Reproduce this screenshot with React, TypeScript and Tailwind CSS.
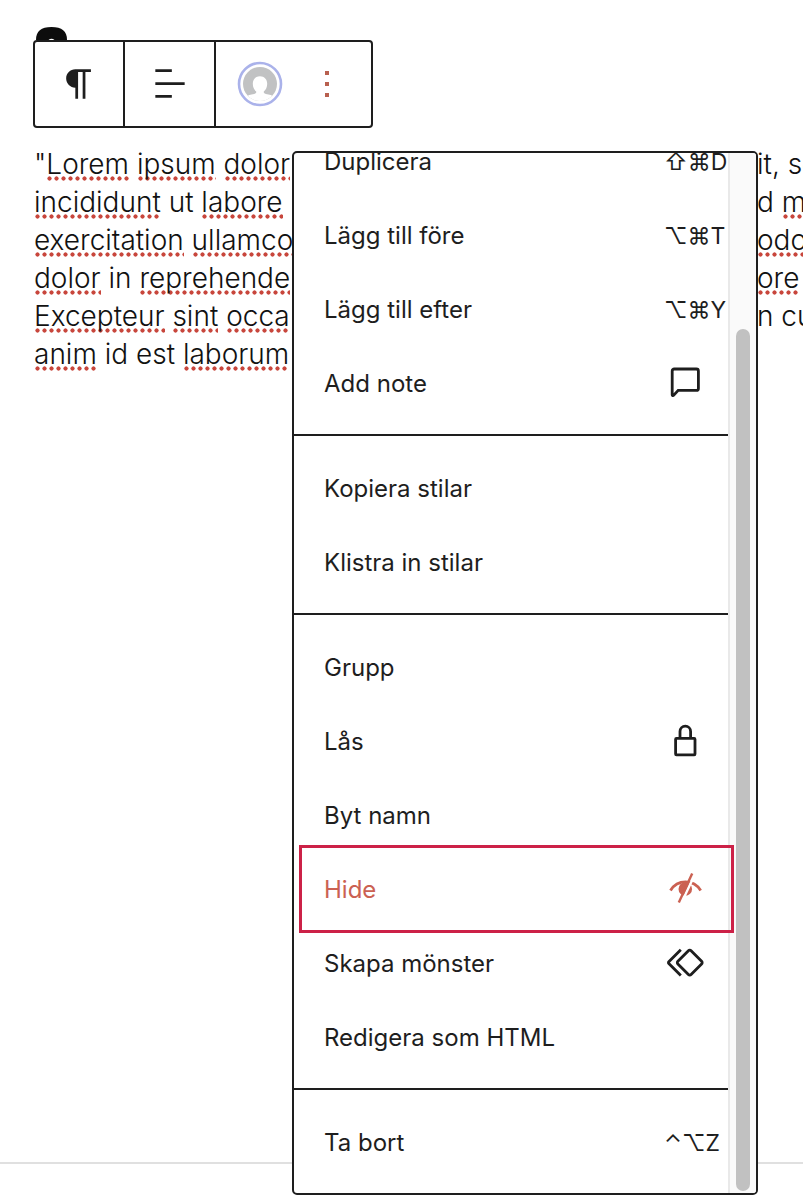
import type { ReactNode } from "react";

type Word = { text: string; misspelled?: boolean };
type Line = { start: Word[]; end?: Word[] };

const bad = (text: string): Word => ({ text, misspelled: true });
const ok = (text: string): Word => ({ text });

const lines: Line[] = [
  { start: [ok('"'), bad("Lorem"), ok(" "), bad("ipsum"), ok(" "), bad("dolor")], end: [ok("it, se")] },
  { start: [bad("incididunt"), ok(" ut "), bad("labore")], end: [ok("d "), bad("m")] },
  { start: [bad("exercitation"), ok(" "), bad("ullamco")], end: [bad("odo")] },
  { start: [bad("dolor"), ok(" in "), bad("reprehende")], end: [bad("ore")] },
  { start: [bad("Excepteur"), ok(" "), bad("sint"), ok(" "), bad("occa")], end: [ok("n cu")] },
  { start: [bad("anim"), ok(" id est "), bad("laborum")] },
];

function Words({ words }: { words: Word[] }) {
  return (
    <>
      {words.map((word, i) => (
        <span
          key={i}
          className={
            word.misspelled
              ? "bg-[radial-gradient(circle,#c8463c_1.8px,transparent_2.4px)] bg-[length:7px_5px] bg-bottom-left bg-repeat-x"
              : undefined
          }
        >
          {word.text}
        </span>
      ))}
    </>
  );
}

function Icon({ children }: { children: ReactNode }) {
  return (
    <svg
      viewBox="0 0 44 44"
      className="size-11"
      fill="none"
      stroke="currentColor"
      strokeWidth="2.8"
      aria-hidden="true"
    >
      {children}
    </svg>
  );
}

const NoteIcon = () => (
  <Icon>
    <path d="M11.2 8H33.4a2 2 0 0 1 2 2V27.4a2 2 0 0 1-2 2H15.2L10.6 34.4a.8 .8 0 0 1-1.4-.6V10a2 2 0 0 1 2-2Z" />
  </Icon>
);

const LockIcon = () => (
  <Icon>
    <rect x="12.6" y="19.4" width="19.4" height="16.4" rx="0.8" />
    <path d="M17 19V12.4a5.3 5.3 0 0 1 10.6 0V19" />
  </Icon>
);

const HiddenIcon = () => (
  <Icon>
    <path d="M7.5 23.4C14.5 12 30.5 12 37.7 23.4" />
    <circle cx="22.3" cy="22" r="6.8" fill="currentColor" stroke="none" />
    <path d="M18.2 36.5 31.8 7.5" stroke="#fff" strokeWidth="2.4" />
    <path d="M15.8 35.6 29.2 6.5" strokeWidth="2.4" />
  </Icon>
);

const PatternIcon = () => (
  <Icon>
    <path d="M25.4 9.7a1.9 1.9 0 0 1 2.7 0L38.6 20.3a1.9 1.9 0 0 1 0 2.7L28.1 33.5a1.9 1.9 0 0 1-2.7 0L14.9 23a1.9 1.9 0 0 1 0-2.7Z" />
    <path d="M17.8 8.8 5.8 20.8a1.2 1.2 0 0 0 0 1.7L17.8 34.6" />
  </Icon>
);

type Item = { label: string; shortcut?: string; icon?: ReactNode; highlighted?: boolean };

const groups: Item[][] = [
  [
    { label: "Duplicera", shortcut: "⇧⌘D" },
    { label: "Lägg till före", shortcut: "⌥⌘T" },
    { label: "Lägg till efter", shortcut: "⌥⌘Y" },
    { label: "Add note", icon: <NoteIcon /> },
  ],
  [{ label: "Kopiera stilar" }, { label: "Klistra in stilar" }],
  [
    { label: "Grupp" },
    { label: "Lås", icon: <LockIcon /> },
    { label: "Byt namn" },
    { label: "Hide", icon: <HiddenIcon />, highlighted: true },
    { label: "Skapa mönster", icon: <PatternIcon /> },
    { label: "Redigera som HTML" },
  ],
  [{ label: "Ta bort", shortcut: "⌃⌥Z" }],
];

function MenuRow({ item }: { item: Item }) {
  return (
    <button
      type="button"
      role="menuitem"
      className={`relative flex h-[74px] w-full items-center justify-between pl-[30px] text-left ${
        item.highlighted ? "text-[#cb6152]" : ""
      }`}
    >
      <span>{item.label}</span>
      {item.shortcut && <span className="w-16 text-[23px] whitespace-nowrap">{item.shortcut}</span>}
      {item.icon && <span className="mr-[21px] pb-0.5">{item.icon}</span>}
      {item.highlighted && (
        <span className="absolute -top-2 -right-1.5 -bottom-1.5 left-[5px] z-10 border-3 border-[#cc2147]" />
      )}
    </button>
  );
}

function BlockMenu() {
  return (
    <div
      role="menu"
      className="absolute top-[151px] left-[292px] flex w-[466px] overflow-hidden rounded-[5px] border-2 border-[#1e1e1e] bg-white text-2xl text-[#1e1e1e]"
    >
      <div className="-mt-7 min-w-0 flex-1">
        {groups.map((group, i) => (
          <div
            key={i}
            role="group"
            className={i === 0 ? "pb-[13px]" : "border-t-2 border-[#1e1e1e] pt-4 pb-[13px]"}
          >
            {group.map((item) => (
              <MenuRow key={item.label} item={item} />
            ))}
          </div>
        ))}
      </div>
      <div className="flex w-7 border-l-2 border-[#e9e9e9] bg-[#fafafa] pt-44 pr-1.5 pb-0.5 pl-1.5">
        <div className="flex-1 rounded-full bg-[#c1c1c1]" />
      </div>
    </div>
  );
}

function Toolbar() {
  return (
    <div
      role="toolbar"
      className="relative flex h-[88px] w-[340px] rounded-[4px] border-2 border-[#1e1e1e] bg-white text-[#1e1e1e]"
    >
      <button
        type="button"
        aria-label="Stycke"
        className="flex w-[90px] items-center justify-center border-r-2 border-[#1e1e1e]"
      >
        <svg viewBox="0 0 24 24" className="size-11" fill="currentColor">
          <path d="m9.996 14v-.225l.004 0v6.225h1.5v-14.5h2.5v14.5h1.5v-14.5h3v-1.5h-8.504c-2.761 0-5 2.239-5 5s2.239 5 5 5z" />
        </svg>
      </button>
      <button
        type="button"
        aria-label="Justera"
        className="flex w-[91px] items-center justify-center border-r-2 border-[#1e1e1e]"
      >
        <svg viewBox="0 0 24 24" className="size-11" fill="currentColor">
          <path d="M13 5.5H4V4h9v1.5Zm7 7H4V11h16v1.5Zm-7 7H4V18h9v1.5Z" />
        </svg>
      </button>
      <div className="flex flex-1 items-center gap-[22px] pl-[21px]">
        <button type="button" aria-label="Profil">
          <svg viewBox="0 0 46 46" className="size-[46px]">
            <defs>
              <clipPath id="avatar">
                <circle cx="23" cy="23" r="17" />
              </clipPath>
            </defs>
            <circle cx="23" cy="23" r="21" fill="#fff" stroke="#aab2ea" strokeWidth="2.6" />
            <g clipPath="url(#avatar)">
              <rect width="46" height="46" fill="#c1c2c3" />
              <path
                fill="#fff"
                d="M23 15.2c-4.400 0-7.200 3.200-7.200 7.600 0 3.200 1.200 6 3.400 7.700.3 1.300-.5 2-2 2.400-3.700.4-6.600 1.300-8.500 3.600v7h28.600v-7c-1.900-2.300-4.800-3.200-8.500-3.600-1.500-.4-2.300-1.100-2-2.400 2.200-1.700 3.400-4.500 3.400-7.700 0-4.400-2.800-7.600-7.200-7.600Z"
              />
            </g>
          </svg>
        </button>
        <button type="button" aria-label="Alternativ" className="text-[#b8604f]">
          <svg viewBox="0 0 44 44" className="size-11" fill="currentColor">
            <path d="M20 9h4v4h-4zM20 20h4v4h-4zM20 31h4v4h-4z" />
          </svg>
        </button>
      </div>
    </div>
  );
}

export default function App() {
  return (
    <div className="relative flex min-h-screen flex-col overflow-hidden bg-white font-['Inter',sans-serif]">
      <div className="px-[33px] pt-[26px]">
        <svg viewBox="0 0 31 14" className="ml-[3px] block h-3.5 w-[31px]" aria-hidden="true">
          <path d="M0 14C0 5 5 1 15.500 1S31 5 31 14Z" fill="#0d0d0d" />
          <path d="M12.500 14q3-2.500 6 0Z" fill="#fff" />
        </svg>
        <Toolbar />
      </div>
      <div className="mt-[17px] pl-[34px] text-[28px] leading-[38px] font-light text-[#111]">
        {lines.map((line, i) => (
          <p key={i} className="flex justify-between whitespace-pre">
            <span>
              <Words words={line.start} />
            </span>
            {line.end && (
              <span className="w-[46px] shrink-0">
                <Words words={line.end} />
              </span>
            )}
          </p>
        ))}
      </div>
      <hr className="mt-auto mb-9 border-t-2 border-[#e0e0e0]" />
      <BlockMenu />
    </div>
  );
}
